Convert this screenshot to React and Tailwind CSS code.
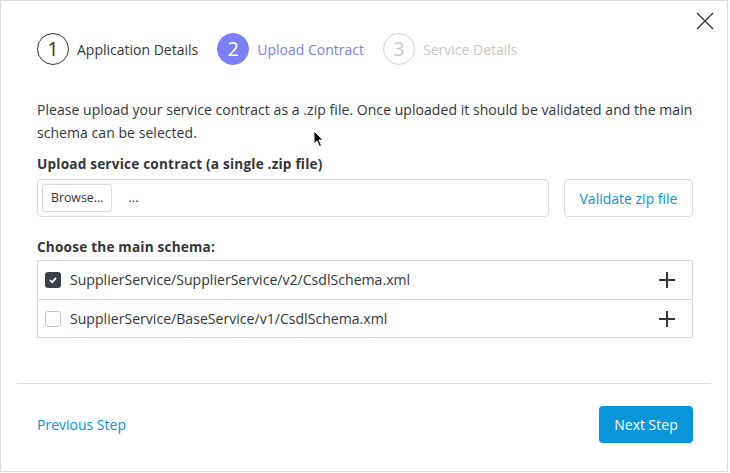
import { useState } from 'react';

const steps = [
    { n: 1, label: 'Application Details', state: 'done' },
    { n: 2, label: 'Upload Contract', state: 'active' },
    { n: 3, label: 'Service Details', state: 'todo' },
];

const schemas = [
    'SupplierService/SupplierService/v2/CsdlSchema.xml',
    'SupplierService/BaseService/v1/CsdlSchema.xml',
];

const Step = ({ n, label, state }) => {
    const circle =
        state === 'active'
            ? 'bg-[#7d7ff6] border-[#7d7ff6] text-white'
            : state === 'done'
            ? 'border-[#32363a] text-[#32363a]'
            : 'border-[#d5d5d5] text-[#c8c8c8]';
    const text =
        state === 'active' ? 'text-[#7d7ff6]' : state === 'done' ? 'text-[#32363a]' : 'text-[#c8c8c8]';
    return (
        <div className="flex items-center">
            <div className={`w-[32px] h-[32px] rounded-full border flex items-center justify-center text-[20px] ${circle}`}>
                {n}
            </div>
            <span className={`ml-[8px] text-[14px] ${text}`}>{label}</span>
        </div>
    );
};

const App = () => {
    const [checked, setChecked] = useState([true, false]);

    return (
        <div className="w-[730px] h-[473px] bg-white font-['Open_Sans',sans-serif] text-[#32363a]">
            <div className="relative w-[728px] h-[472px] border border-[#dcdcdc] flex flex-col">
                {/* close */}
                <button className="absolute top-[11px] right-[13px] w-[18px] h-[18px]">
                    <svg viewBox="0 0 18 18" width="18" height="18" stroke="#32363a" strokeWidth="1.3">
                        <path d="M1 1 L17 17 M17 1 L1 17" />
                    </svg>
                </button>

                {/* cursor */}
                <svg className="absolute left-[312px] top-[129px]" width="12" height="18" viewBox="0 0 12 18">
                    <path d="M1 1 L1 14 L4 11 L6.5 16.5 L8.5 15.5 L6 10 L10 10 Z" fill="#000" stroke="#fff" strokeWidth="1" />
                </svg>

                <div className="ml-[36px] w-[656px]">
                    <div className="flex items-center gap-[19px] mt-[32px]">
                        {steps.map((s) => (
                            <Step key={s.n} {...s} />
                        ))}
                    </div>

                    <p className="mt-[33px] text-[14px] leading-[23px] tracking-[0.05px]">
                        Please upload your service contract as a .zip file. Once uploaded it should be validated and the main schema can be selected.
                    </p>

                    <div className="mt-[10px] text-[13.6px] tracking-[0.2px] leading-[20px] font-bold">Upload service contract (a single .zip file)</div>
                    <div className="mt-[5px] flex items-center">
                        <div className="flex-1 h-[38px] border border-[#dcdcdc] rounded-[4px] flex items-center px-[4px]">
                            <button className="h-[28px] px-[8px] border border-[#dcdcdc] rounded-[3px] text-[12.3px] bg-white">
                                Browse...
                            </button>
                            <span className="ml-[16px] text-[13px]">...</span>
                        </div>
                        <button className="ml-[15px] w-[129px] h-[38px] border border-[#dcdcdc] rounded-[4px] text-[14px] text-[#0a93d8]">
                            Validate zip file
                        </button>
                    </div>

                    <div className="mt-[20px] text-[13.6px] tracking-[0.2px] leading-[20px] font-bold">Choose the main schema:</div>
                    <div className="mt-[3px] border border-[#d9d9d9]">
                        {schemas.map((s, i) => (
                            <div
                                key={s}
                                className={`h-[38px] flex items-center pl-[7px] pr-[16px] ${i > 0 ? 'border-t border-[#d9d9d9]' : ''}`}
                            >
                                <button
                                    onClick={() => setChecked(checked.map((c, j) => (j === i ? !c : c)))}
                                    className={`w-[16px] h-[16px] rounded-[3px] flex items-center justify-center ${
                                        checked[i] ? 'bg-[#3a3f4b]' : 'border border-[#c6c6c6] bg-white'
                                    }`}
                                >
                                    {checked[i] && (
                                        <svg width="10" height="10" viewBox="0 0 10 10" fill="none" stroke="#fff" strokeWidth="1.8">
                                            <path d="M2 5.2 L4.2 7.3 L8 2.8" />
                                        </svg>
                                    )}
                                </button>
                                <span className="ml-[9px] text-[14.1px] flex-1">{s}</span>
                                <svg width="18" height="18" viewBox="0 0 18 18" stroke="#32363a" strokeWidth="2">
                                    <path d="M9 1 V17 M1 9 H17" />
                                </svg>
                            </div>
                        ))}
                    </div>
                </div>

                <div className="mt-auto mx-[16px] border-t border-[#dcdcdc]" />
                <div className="ml-[36px] w-[656px] flex items-center justify-between h-[87px] pb-[6px]">
                    <button className="text-[14px] text-[#0a93d8]">Previous Step</button>
                    <button className="w-[94px] h-[37px] rounded-[4px] bg-[#0a96da] text-white text-[14px]">Next Step</button>
                </div>
            </div>
        </div>
    );
};

export default App;
